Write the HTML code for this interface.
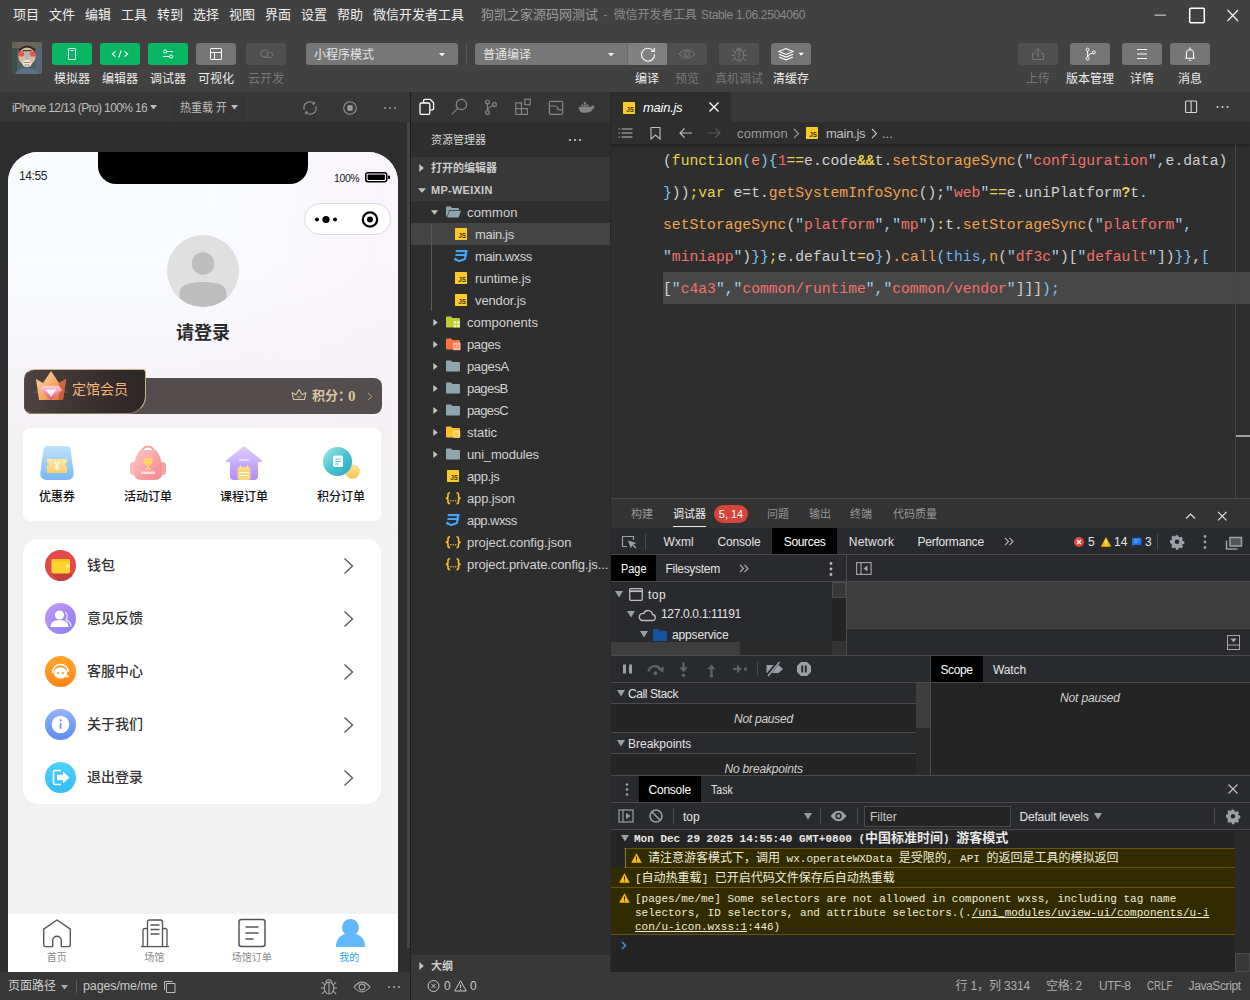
<!DOCTYPE html>
<html lang="zh-CN">
<head>
<meta charset="utf-8">
<title>微信开发者工具</title>
<style>
*{box-sizing:border-box;margin:0;padding:0}
html,body{width:1250px;height:1000px;overflow:hidden;background:#414141}
body{position:relative;font-family:"Liberation Sans","Noto Sans CJK SC",sans-serif;font-size:12px;color:#ddd;-webkit-font-smoothing:antialiased}
.a{position:absolute;white-space:nowrap}
svg{display:block;overflow:visible}
/* ---------- menubar ---------- */
#menubar{left:0;top:0;width:1250px;height:30px;background:#414141}
#menubar .mi{top:5px;height:20px;line-height:20px;font-size:13px;color:#f0f0f0}
#title{left:481px;top:5px;height:20px;line-height:20px;font-size:13px;color:#8d8d8d}
.ti{top:5px;height:20px;line-height:20px;font-size:12px;color:#8a8a8a}
/* ---------- toolbar ---------- */
#toolbar{left:0;top:30px;width:1250px;height:62px;background:#414141}
.tb{top:13px;width:40px;height:22px;border-radius:3px;background:#757575}
.tb.g{background:#07b562}
.tb.d{background:#505050}
.tb svg{position:absolute;left:0;top:0}
.tl{top:40.5px;width:80px;height:16px;line-height:16px;text-align:center;font-size:12px;color:#ececec}
.tl.d{color:#777}
.dd{top:13px;height:22px;border-radius:3px;background:#777;line-height:25px;font-size:12px;color:#e6e6e6;padding-left:8px}

/* ---------- simulator ---------- */
#sim{left:0;top:92px;width:410px;height:908px;background:#2e2e2e}
#simbar{left:0;top:0;width:410px;height:30px;background:#373737}
#simbar span{top:8px;height:16px;line-height:16px;font-size:12px;color:#bdbdbd}
#simfoot{left:0;top:880px;width:410px;height:28px;background:#383838}
#phone{left:8px;top:60px;width:390px;height:820px;background:#f2f2f2;border-radius:30px 30px 0 0;overflow:hidden;color:#222;font-family:"Liberation Sans","Noto Sans CJK SC",sans-serif}
#phone .bg1{left:0;top:0;width:390px;height:420px;background:linear-gradient(100deg,#f8fbff 0%,#f8fbff 45%,#fbf2fa 100%)}
#phone .bg2{left:0;top:110px;width:390px;height:310px;background:linear-gradient(to bottom,rgba(246,241,246,0) 0%,rgba(246,241,246,.9) 45%,#f3f1f3 75%,#f2f2f2 100%)}
.gl{top:338px;height:14px;line-height:14px;font-size:12px;color:#111;font-weight:500;text-align:center}
.li{left:79px;height:20px;line-height:20px;font-size:14px;color:#333;font-weight:500}
.tabl{top:800px;width:97.5px;height:12px;line-height:12px;font-size:10px;color:#8a8a8a;text-align:center}

/* ---------- explorer ---------- */
#exp{left:411px;top:92px;width:199px;height:908px;background:#2e2e2e}
.sec{left:0;width:199px;height:22px;background:#383838}
.sec span{left:20px;top:0;height:22px;line-height:22px;font-size:11px;font-weight:bold;color:#ccc}
.tr{left:0;width:199px;height:22px}
.tr span{top:1px;height:22px;line-height:22px;font-size:13px;color:#d2d2d2}
.tr svg{position:absolute}
/* ---------- editor ---------- */
#ed{left:610px;top:92px;width:640px;height:406px;background:#2e2e2e}
#code{left:53px;top:53px;font-family:"Liberation Mono",monospace;font-size:14.690px;line-height:32px;color:#cfcfcf;white-space:pre}
#code i{font-style:normal}
.y{color:#e6d44c}.o{color:#f2a24c}.b{color:#7dc4f2}.s{color:#f0726a}.q{color:#a9cfea}.r{color:#f2625c}.k{color:#6cb2f4}.p{color:#f08a6a}

/* ---------- debugger panel ---------- */
#pn{left:610px;top:498px;width:640px;height:474px;background:#242424;color:#d8d8d8}
#pn .t{height:16px;line-height:16px;font-size:12px}
.pt{top:8px;height:16px;line-height:16px;font-size:11px;color:#969696}
.dt{top:36px;height:16px;line-height:16px;font-size:12px;color:#e4e4e4}
.cl{font-family:"Liberation Mono","Noto Sans CJK SC",monospace;font-size:11px;line-height:14px;color:#f1ecd9;height:14px}
.cj{font-size:12px}
#loghdr .cj{font-size:13px}
#status{left:610px;top:972px;width:640px;height:28px;background:#383838}
#status span{top:6px;height:16px;line-height:16px;font-size:12px;color:#adadad}
</style>
</head>
<body>
<!-- MENUBAR -->
<div id="menubar" class="a">
<span class="a mi" style="left:13px">项目</span>
<span class="a mi" style="left:49px">文件</span>
<span class="a mi" style="left:85px">编辑</span>
<span class="a mi" style="left:121px">工具</span>
<span class="a mi" style="left:157px">转到</span>
<span class="a mi" style="left:193px">选择</span>
<span class="a mi" style="left:229px">视图</span>
<span class="a mi" style="left:265px">界面</span>
<span class="a mi" style="left:301px">设置</span>
<span class="a mi" style="left:337px">帮助</span>
<span class="a mi" style="left:373px">微信开发者工具</span>
<span class="a ti" style="letter-spacing:0.01px;left:481px;font-size:13px;color:#9c9c9c">狗凯之家源码网测试</span><span class="a ti" style="left:603.5px">-</span><span class="a ti" style="letter-spacing:-0.14px;left:613.7px">微信开发者工具</span><span class="a ti" style="letter-spacing:-0.35px;left:701px">Stable 1.06.2504060</span>
<svg class="a" style="left:1150px;top:4px" width="96" height="24" viewBox="0 0 96 24" fill="none">
<path d="M4.5 11.2H16" stroke="#a6a6a6" stroke-width="1.6"/>
<rect x="39.7" y="4.2" width="14.6" height="14.6" rx="1" stroke="#fff" stroke-width="1.5"/>
<path d="M77.5 6L88 17M88 6L77.5 17" stroke="#f2f2f2" stroke-width="1.2"/>
</svg>
</div>
<!-- TOOLBAR -->
<div id="toolbar" class="a">
<!-- avatar -->
<svg class="a" style="left:12px;top:12px" width="30" height="32" viewBox="0 0 30 32">
<defs><clipPath id="avc"><rect width="30" height="32" rx="2"/></clipPath></defs>
<g clip-path="url(#avc)">
<rect width="30" height="32" fill="#4d5f5c"/>
<rect x="0" y="0" width="30" height="6" fill="#6b6459"/>
<rect x="24" y="4" width="6" height="28" fill="#56657a"/>
<rect x="0" y="6" width="5" height="26" fill="#3c4f4e"/>
<path d="M7 7q8-7 16 0v4H7z" fill="#2f2724"/>
<ellipse cx="15" cy="14.500" rx="8.600" ry="9" fill="#d9bc9e"/>
<ellipse cx="9.300" cy="12" rx="3.100" ry="2.700" fill="#e5564b"/>
<ellipse cx="20.700" cy="12" rx="3.100" ry="2.700" fill="#e5564b"/>
<ellipse cx="15" cy="13.500" rx="2.600" ry="3.400" fill="#a5b6c4"/>
<rect x="10.500" y="8" width="9" height="1.300" fill="#4a3c34"/>
<ellipse cx="15" cy="21.500" rx="4.600" ry="3.400" fill="#efe6dc"/>
<path d="M11.500 20.500h7M12.500 23h5" stroke="#8a6a58" stroke-width=".8"/>
<path d="M3 32q2-6 12-6t12 6z" fill="#5d708c"/>
</g>
</svg>
<!-- left buttons -->
<div class="a tb g" style="left:52px"><svg width="40" height="22" viewBox="0 0 40 22" fill="none" stroke="#fff" stroke-width="1"><rect x="16.5" y="5.5" width="7" height="11" rx="0.8"/><path d="M18.5 7.5h3"/></svg></div>
<div class="a tb g" style="left:100px"><svg width="40" height="22" viewBox="0 0 40 22" fill="none" stroke="#fff" stroke-width="1.1"><path d="M15.5 8.3L12.3 11l3.2 2.7M24.5 8.3l3.2 2.7-3.2 2.7M21.3 7.5l-2.6 7"/></svg></div>
<div class="a tb g" style="left:148px"><svg width="40" height="22" viewBox="0 0 40 22" fill="none" stroke="#fff" stroke-width="1"><path d="M18.800 8.500H25M15 13.500h6.400"/><circle cx="17.200" cy="8.500" r="1.600"/><circle cx="23" cy="13.500" r="1.600"/></svg></div>
<div class="a tb" style="left:196px"><svg width="40" height="22" viewBox="0 0 40 22" fill="none" stroke="#fff" stroke-width="1"><rect x="14.5" y="5.5" width="11" height="11" rx="0.6"/><path d="M14.5 9.5h11M18.5 9.5v7"/></svg></div>
<div class="a tb d" style="left:246px"><svg width="40" height="22" viewBox="0 0 40 22" fill="none" stroke="#787878" stroke-width="1"><circle cx="18.300" cy="10.500" r="3.600"/><path d="M21.300 12.400a2.700 2.700 0 1 1 1.700 2h-4.500"/></svg></div>
<span class="a tl" style="left:32px">模拟器</span>
<span class="a tl" style="left:80px">编辑器</span>
<span class="a tl" style="left:128px">调试器</span>
<span class="a tl" style="left:176px">可视化</span>
<span class="a tl d" style="left:226px">云开发</span>
<!-- dropdowns -->
<div class="a dd" style="left:306px;width:152px">小程序模式</div>
<svg class="a" style="left:439px;top:23px" width="6" height="4" viewBox="0 0 6 4"><path d="M0 0h6L3 3.6z" fill="#f0f0f0"/></svg>
<div class="a" style="left:466px;top:13px;width:1px;height:22px;background:#555"></div>
<div class="a dd" style="left:475px;width:152px;border-radius:3px 0 0 3px">普通编译</div>
<svg class="a" style="left:608px;top:23px" width="6" height="4" viewBox="0 0 6 4"><path d="M0 0h6L3 3.6z" fill="#f0f0f0"/></svg>
<div class="a tb" style="left:627px;border-radius:0;background:#808080;border-left:1px solid #6a6a6a"><svg width="40" height="22" viewBox="0 0 40 22" fill="none" stroke="#fff" stroke-width="1.1"><path d="M25 7.600A6.500 6.500 0 1 0 26.500 11.400"/><path d="M26.300 5v3.400h-3.400"/></svg></div>
<div class="a tb d" style="left:667px;border-radius:0 3px 3px 0"><svg width="40" height="22" viewBox="0 0 40 22" fill="none" stroke="#787878" stroke-width="1"><path d="M12 11q8-8.600 16 0q-8 8.600-16 0z"/><circle cx="20" cy="11" r="2.500"/></svg></div>
<div class="a tb d" style="left:719px;width:40px"><svg width="40" height="22" viewBox="0 0 40 22" fill="none" stroke="#787878" stroke-width="1"><ellipse cx="20" cy="12.300" rx="4.600" ry="5.800"/><path d="M20 6.500v11.600M17.300 7a2.900 2.900 0 0 1 5.400 0M15.400 12.300h-3.200M24.600 12.300h3.200M16 9.200l-3-2.400M24 9.200l3-2.400M16 15.400l-3 2.400M24 15.400l3 2.400"/></svg></div>
<div class="a tb" style="left:771px"><svg width="40" height="22" viewBox="0 0 40 22" fill="none" stroke="#fff" stroke-width="1.1"><path d="M15 5.6l7 2.9-7 2.9-7-2.9z"/><path d="M8 11.2l7 2.9 7-2.9M8 13.9l7 2.9 7-2.9"/><path d="M27.6 9.8h5.2l-2.6 3z" fill="#fff" stroke="none"/></svg></div>
<span class="a tl" style="left:607px">编译</span>
<span class="a tl d" style="left:647px">预览</span>
<span class="a tl d" style="left:699px">真机调试</span>
<span class="a tl" style="left:751px">清缓存</span>
<!-- right buttons -->
<div class="a tb d" style="left:1018px"><svg width="40" height="22" viewBox="0 0 40 22" fill="none" stroke="#787878" stroke-width="1"><path d="M20 14V5.8M17 8.6l3-3 3 3M16.8 10.5h-2.3v6h11v-6h-2.3"/></svg></div>
<div class="a tb" style="left:1070px"><svg width="40" height="22" viewBox="0 0 40 22" fill="none" stroke="#fff" stroke-width="1"><circle cx="17.6" cy="6.6" r="1.5"/><circle cx="17.6" cy="15.4" r="1.5"/><circle cx="23.8" cy="9.4" r="1.5"/><path d="M17.6 8.1v5.8M17.7 13.6q.4-2.6 4.8-3.4"/></svg></div>
<div class="a tb" style="left:1122px"><svg width="40" height="22" viewBox="0 0 40 22" fill="none" stroke="#fff" stroke-width="1.1"><path d="M15 6.5h10M15 11h10M15 15.5h10"/></svg></div>
<div class="a tb" style="left:1170px"><svg width="40" height="22" viewBox="0 0 40 22" fill="none" stroke="#fff" stroke-width="1.1"><path d="M15.2 15.2h9.6M16.4 15v-4.6a3.6 3.6 0 0 1 7.2 0V15M20 4.6v1.6M18.8 17.3h2.4"/></svg></div>
<span class="a tl d" style="left:998px">上传</span>
<span class="a tl" style="left:1050px">版本管理</span>
<span class="a tl" style="left:1102px">详情</span>
<span class="a tl" style="left:1150px">消息</span>
</div>

<!-- SIMULATOR -->
<div id="sim" class="a">
<div id="simbar" class="a">
<span class="a" style="letter-spacing:-0.63px;left:12px">iPhone 12/13 (Pro) 100% 16</span>
<svg class="a" style="left:150px;top:13px" width="7" height="5" viewBox="0 0 7 5"><path d="M0 0h7L3.5 4.4z" fill="#bdbdbd"/></svg>
<div class="a" style="left:169px;top:0;width:1px;height:30px;background:#3d3d3d"></div>
<span class="a" style="transform:scaleX(0.915);transform-origin:0 50%;left:180px">热重载 开</span>
<svg class="a" style="left:231px;top:13px" width="7" height="5" viewBox="0 0 7 5"><path d="M0 0h7L3.5 4.4z" fill="#bdbdbd"/></svg>
<div class="a" style="left:247px;top:0;width:1px;height:30px;background:#3d3d3d"></div>
<svg class="a" style="left:300px;top:6px" width="100" height="20" viewBox="0 0 100 20" fill="none" stroke="#929292" stroke-width="1.1">
<path d="M4.300 11.800A5.900 5.900 0 0 1 14.200 5.800M15.700 8.200A5.900 5.900 0 0 1 5.800 14.200"/><path d="M14.800 3.600l-.4 2.600-2.600-.4M5.200 16.400l.4-2.600 2.600.4" stroke-width=".9"/>
<circle cx="50" cy="10" r="6.3"/><rect x="47.3" y="7.3" width="5.4" height="5.4" rx="0.8" fill="#9a9a9a" stroke="none"/>
<g fill="#9a9a9a" stroke="none"><circle cx="85" cy="10" r="1"/><circle cx="90" cy="10" r="1"/><circle cx="95" cy="10" r="1"/></g>
</svg>
</div>
<div class="a" style="left:407px;top:30px;width:3px;height:826px;background:#454545"></div>
<!-- PHONE -->
<div id="phone" class="a">
<div class="a bg1"></div><div class="a bg2"></div>
<div class="a" style="left:90px;top:0;width:210px;height:32px;background:#000;border-radius:0 0 18px 18px"></div>
<span class="a" style="left:11px;top:17px;height:14px;line-height:14px;font-size:12px;color:#222;letter-spacing:-0.4px">14:55</span>
<span class="a" style="left:326px;top:19px;height:14px;line-height:14px;font-size:10.5px;color:#222;letter-spacing:-0.4px">100%</span>
<svg class="a" style="left:357px;top:20px" width="27" height="11" viewBox="0 0 27 11"><rect x="0.75" y="0.75" width="21" height="9" rx="2.2" fill="none" stroke="#000" stroke-width="1.5"/><rect x="2.6" y="2.6" width="17.3" height="5.3" rx="1" fill="#000"/><rect x="23" y="3.5" width="2" height="3.5" rx="0.8" fill="#000"/></svg>
<!-- capsule -->
<div class="a" style="left:296px;top:51px;width:87px;height:32px;border-radius:16px;background:#fff;border:1px solid #dcdcdc"></div>
<svg class="a" style="left:296px;top:51px" width="87" height="32" viewBox="0 0 87 32"><circle cx="13" cy="16.5" r="2" fill="#000"/><circle cx="22" cy="16.5" r="3.6" fill="#000"/><circle cx="31" cy="16.5" r="2" fill="#000"/><circle cx="66" cy="16.5" r="7.2" fill="none" stroke="#000" stroke-width="2.2"/><circle cx="66" cy="16.5" r="3" fill="#000"/></svg>
<!-- avatar -->
<svg class="a" style="left:159px;top:83px" width="72" height="72" viewBox="0 0 72 72"><defs><clipPath id="pc"><circle cx="36" cy="36" r="36"/></clipPath></defs><circle cx="36" cy="36" r="36" fill="#e0e0e0"/><g clip-path="url(#pc)" fill="#bdbdbd"><circle cx="36" cy="28.5" r="11.3"/><path d="M12.5 72V58q0-11 23.500-11t23.500 11v14z"/></g></svg>
<span class="a" style="left:0;top:169px;width:390px;height:24px;line-height:24px;font-size:18px;font-weight:bold;color:#2a2a2a;text-align:center">请登录</span>
<!-- vip bar -->
<div class="a" style="left:16px;top:226px;width:358px;height:36px;border-radius:8px;background:#534d4e"></div>
<div class="a" style="left:16px;top:217px;width:122px;height:45px;border-radius:10px 3px 18px 8px;background:linear-gradient(90deg,#4d4341 0%,#352c2b 70%,#2e2727 100%);border:1px solid #c9b48c;border-left-color:#5a4d48;border-bottom-color:#8a7a60"></div>
<svg class="a" style="left:22px;top:216px" width="42" height="36" viewBox="0 0 42 36">
<defs><linearGradient id="cr1" x1="0" y1="0" x2="1" y2="1"><stop offset="0" stop-color="#ffd9a0"/><stop offset="0.6" stop-color="#f2a35e"/><stop offset="1" stop-color="#d2603a"/></linearGradient>
<linearGradient id="cr2" x1="0" y1="0" x2="0" y2="1"><stop offset="0" stop-color="#ffd1e0"/><stop offset="1" stop-color="#e6486e"/></linearGradient></defs>
<ellipse cx="21" cy="24" rx="18" ry="1.2" fill="#8a6a4a" opacity=".6"/>
<path d="M6 11l7 4 8-12 8 12 7-4-3 21H9z" fill="url(#cr1)"/>
<path d="M29 15l7-4-3 21h-4z" fill="#c85a38" opacity=".8"/>
<path d="M13 18h16l3 4-11 10L10 22z" fill="url(#cr2)"/>
<path d="M15.500 21.500h11L21 29z" fill="#fff" opacity=".85"/>
</svg>
<span class="a" style="left:64px;top:227px;height:20px;line-height:20px;font-size:14px;color:#f2b476">定馆会员</span>
<svg class="a" style="left:283px;top:236px" width="16" height="14" viewBox="0 0 16 14" fill="none" stroke="#dcc3a0" stroke-width="1.1"><path d="M2.500 11.500L1.200 4.600l3.600 2.200L8 1.600l3.200 5.200 3.600-2.200-1.300 6.900z" stroke-linejoin="round"/><path d="M6.300 8.600q1.700 1.300 3.400 0"/></svg>
<span class="a" style="left:304px;top:235px;height:18px;line-height:18px;font-size:13px;font-weight:bold;color:#dcc3a0">积分：</span>
<span class="a" style="left:340px;top:235px;height:18px;line-height:18px;font-size:15px;font-weight:bold;color:#dcc3a0;font-family:'Liberation Serif',serif">0</span>
<svg class="a" style="left:359px;top:240px" width="6" height="9" viewBox="0 0 6 9" fill="none" stroke="#b9a58a" stroke-width="1"><path d="M1 .8L4.800 4.500 1 8.200"/></svg>
<!-- grid card -->
<div class="a" style="left:15px;top:276px;width:358px;height:93px;border-radius:7px;background:#fff"></div>

<svg class="a" style="left:32px;top:294px" width="34" height="34" viewBox="0 0 34 34"><defs><linearGradient id="g1" x1="0" y1="0" x2="0" y2="1"><stop offset="0" stop-color="#bfe3fb"/><stop offset="1" stop-color="#78b6f6"/></linearGradient><linearGradient id="g1b" x1="0" y1="0" x2="0" y2="1"><stop offset="0" stop-color="#ffe9a8"/><stop offset="1" stop-color="#f8cf6a"/></linearGradient></defs><path d="M7 0h20q3 0 3.600 4l3 22q.8 8-7 8H7.400q-8 0-7-8l3-22Q4 0 7 0z" fill="url(#g1)"/><path d="M7 13h20v3.500a1.800 1.800 0 0 0 0 3.600V27H7v-6.900a1.800 1.800 0 0 0 0-3.600z" fill="url(#g1b)"/><path d="M14.800 16l2.200 3 2.200-3M17 19v5M14.800 20.500h4.400M14.800 22.500h4.400" stroke="#fff" stroke-width="1.100" fill="none"/></svg>
<svg class="a" style="left:122px;top:294px" width="36" height="34" viewBox="0 0 36 34"><defs><linearGradient id="g2" x1="0" y1="0" x2="1" y2="1"><stop offset="0" stop-color="#fcc6c8"/><stop offset="1" stop-color="#f78489"/></linearGradient></defs><path d="M11.500 7a6.500 6.500 0 0 1 13 0" fill="none" stroke="#f9a3a8" stroke-width="2"/><rect x="0" y="16" width="7" height="13" rx="3.500" fill="#fbb9bd"/><rect x="29" y="16" width="7" height="13" rx="3.500" fill="#f9a0a5"/><path d="M10 4h16q4 4 6 14v9q0 7-7 7H11q-7 0-7-7v-9q2-10 6-14z" fill="url(#g2)"/><path d="M13.500 12h9v3a4.500 4.500 0 0 1-9 0z" fill="#ffd36a"/><path d="M17.200 19h1.600v3h-1.600z" fill="#ffd36a"/><rect x="15" y="22" width="6" height="1.500" fill="#ffd36a"/><rect x="11" y="25.500" width="14" height="2.600" rx="1" fill="#fde1e2"/></svg>
<svg class="a" style="left:218px;top:294px" width="36" height="34" viewBox="0 0 36 34"><defs><linearGradient id="g3" x1="0" y1="0" x2="0" y2="1"><stop offset="0" stop-color="#e0d0fd"/><stop offset="1" stop-color="#b18af8"/></linearGradient></defs><path d="M18 0L36 14.500q.5 1.500-1.500 1.500H32v14q0 4-4 4H8q-4 0-4-4V16H1.500Q-.5 16 0 14.500z" fill="url(#g3)"/><rect x="13" y="13" width="10" height="2" rx="1" fill="#e9defd"/><rect x="11.500" y="21" width="13" height="13" rx="2" fill="#fbd77c"/><path d="M14.500 19.500v3M21.500 19.500v3" stroke="#fde7a8" stroke-width="1.200"/><path d="M13.500 26.500h9M13.500 29.500h9" stroke="#fff" stroke-width="1.100"/></svg>
<svg class="a" style="left:315px;top:295px" width="37" height="32" viewBox="0 0 37 32"><defs><linearGradient id="g4" x1="0" y1="0" x2="1" y2="1"><stop offset="0" stop-color="#a5ebe8"/><stop offset="0.500" stop-color="#4cc5cf"/><stop offset="1" stop-color="#2aa6c4"/></linearGradient><linearGradient id="g4b" x1="0" y1="0" x2="0" y2="1"><stop offset="0" stop-color="#fde49a"/><stop offset="1" stop-color="#f7c34e"/></linearGradient></defs><circle cx="29.500" cy="24.500" r="7.300" fill="url(#g4b)"/><circle cx="14.500" cy="14.500" r="14.500" fill="url(#g4)"/><rect x="10" y="8.500" width="10" height="11.500" rx="1.800" fill="#fff"/><path d="M12 12h6M12 14.500h6M12 17h4" stroke="#5fd0d4" stroke-width="1.100"/></svg>

<span class="a gl" style="left:31px;width:36px">优惠券</span>
<span class="a gl" style="left:116px;width:48px">活动订单</span>
<span class="a gl" style="left:212px;width:48px">课程订单</span>
<span class="a gl" style="left:309px;width:48px">积分订单</span>
<!-- list card -->
<div class="a" style="left:15px;top:387px;width:358px;height:265px;border-radius:15px;background:#fff"></div>

<svg class="a" style="left:37px;top:398px" width="31" height="31" viewBox="0 0 31 31"><defs><clipPath id="l1"><circle cx="15.500" cy="15.500" r="15.500"/></clipPath></defs><circle cx="15.500" cy="15.500" r="15.500" fill="#e2494a"/><g clip-path="url(#l1)"><path d="M6.500 23.500L25 22.500 40 40H20z" fill="#c63d3e"/></g><rect x="6.500" y="9" width="18.500" height="14.500" rx="2" fill="#ffd42e"/><rect x="6.500" y="9" width="18.500" height="2.600" rx="1.300" fill="#f7c21c"/><rect x="20.500" y="14.500" width="4.500" height="3" rx="1" fill="#ffe88a"/></svg>
<svg class="a" style="left:37px;top:451px" width="31" height="31" viewBox="0 0 31 31"><defs><linearGradient id="l2" x1="0" y1="0" x2="1" y2="1"><stop offset="0" stop-color="#c19af8"/><stop offset="1" stop-color="#8d7af7"/></linearGradient></defs><circle cx="15.500" cy="15.500" r="15.500" fill="url(#l2)"/><circle cx="14.500" cy="12" r="4.600" fill="#fff"/><path d="M5.500 24q0-7 9-7t9 7z" fill="#fff"/><path d="M20 9q4 3 1 8 5 2 5 6.500" fill="none" stroke="#e5dafd" stroke-width="1.400"/></svg>
<svg class="a" style="left:37px;top:504px" width="31" height="31" viewBox="0 0 31 31"><defs><linearGradient id="l3" x1="0" y1="0" x2="0" y2="1"><stop offset="0" stop-color="#ffa82a"/><stop offset="1" stop-color="#ff8418"/></linearGradient></defs><circle cx="15.500" cy="15.500" r="15.500" fill="url(#l3)"/><path d="M7.500 17a8 8 0 0 1 16-1" fill="none" stroke="#fff" stroke-width="1.500"/><ellipse cx="15.500" cy="17" rx="6.800" ry="5.800" fill="#fff"/><path d="M21 19l3.500 1-3 2z" fill="#fff"/><circle cx="13" cy="17" r="1" fill="#ff8f1e"/><circle cx="18" cy="17" r="1" fill="#ff8f1e"/></svg>
<svg class="a" style="left:37px;top:557px" width="31" height="31" viewBox="0 0 31 31"><defs><linearGradient id="l4" x1="0" y1="0" x2="0" y2="1"><stop offset="0" stop-color="#92b2f4"/><stop offset="1" stop-color="#5c8ef2"/></linearGradient></defs><circle cx="15.500" cy="15.500" r="15.500" fill="url(#l4)"/><circle cx="15.500" cy="15.500" r="8.800" fill="#fff"/><rect x="14.700" y="14" width="1.800" height="6" rx=".5" fill="#6a98f3"/><circle cx="15.600" cy="11.400" r="1.100" fill="#6a98f3"/></svg>
<svg class="a" style="left:37px;top:610px" width="31" height="31" viewBox="0 0 31 31"><defs><linearGradient id="l5" x1="0" y1="0" x2="0" y2="1"><stop offset="0" stop-color="#4dd2ff"/><stop offset="1" stop-color="#33bdf5"/></linearGradient></defs><circle cx="15.500" cy="15.500" r="15.500" fill="url(#l5)"/><path d="M16 8.500H10q-1.500 0-1.500 1.500v11q0 1.500 1.500 1.500h6" fill="none" stroke="#fff" stroke-width="1.600"/><path d="M12 12.800h6V9.500l6.500 6-6.500 6v-3.300h-6z" fill="#fff"/></svg>

<span class="a li" style="top:403px">钱包</span>
<span class="a li" style="top:456px">意见反馈</span>
<span class="a li" style="top:509px">客服中心</span>
<span class="a li" style="top:562px">关于我们</span>
<span class="a li" style="top:615px">退出登录</span>
<svg class="a" style="left:335px;top:404.5px" width="11" height="18" viewBox="0 0 11 18" fill="none" stroke="#555" stroke-width="1.300"><path d="M1.500 1.500L9.500 9 1.500 16.500"/></svg>
<svg class="a" style="left:335px;top:457.5px" width="11" height="18" viewBox="0 0 11 18" fill="none" stroke="#555" stroke-width="1.300"><path d="M1.500 1.500L9.500 9 1.500 16.500"/></svg>
<svg class="a" style="left:335px;top:510.5px" width="11" height="18" viewBox="0 0 11 18" fill="none" stroke="#555" stroke-width="1.300"><path d="M1.500 1.500L9.500 9 1.500 16.500"/></svg>
<svg class="a" style="left:335px;top:563.5px" width="11" height="18" viewBox="0 0 11 18" fill="none" stroke="#555" stroke-width="1.300"><path d="M1.500 1.500L9.500 9 1.500 16.500"/></svg>
<svg class="a" style="left:335px;top:616.5px" width="11" height="18" viewBox="0 0 11 18" fill="none" stroke="#555" stroke-width="1.300"><path d="M1.500 1.500L9.500 9 1.500 16.500"/></svg>

<!-- tabbar -->
<div class="a" style="left:0;top:762px;width:390px;height:58px;background:#fff"></div>

<svg class="a" style="left:34px;top:766px" width="30" height="30" viewBox="0 0 30 30" fill="none" stroke="#555" stroke-width="1.400" stroke-linejoin="round"><path d="M15 2L1.700 11.200V27q0 1.600 1.600 1.600h7.400v-6a4.300 4.300 0 0 1 8.600 0v6h7.400q1.600 0 1.600-1.600V11.200z"/></svg>
<svg class="a" style="left:133px;top:766px" width="28" height="30" viewBox="0 0 28 30" fill="none" stroke="#555" stroke-width="1.300"><path d="M0 28.600h28"/><path d="M6.500 28V4q0-2 2-2h11q2 0 2 2v24"/><path d="M6.500 10.500H4q-2 0-2 2V28M21.500 10.500H24q2 0 2 2V28"/><path d="M9.500 7h9M9.500 11.500h9M9.500 16h9"/></svg>
<svg class="a" style="left:230px;top:766px" width="28" height="30" viewBox="0 0 28 30" fill="none" stroke="#555" stroke-width="1.500"><rect x="1" y="1.500" width="26" height="27" rx="2.500"/><path d="M7.500 9h13M7.500 15h13M7.500 21h8" stroke-width="1.300"/></svg>
<svg class="a" style="left:328px;top:767px" width="29" height="28" viewBox="0 0 29 28" fill="#62b8fd"><circle cx="14.500" cy="8.500" r="8.500"/><path d="M0 28q0-13.500 14.500-13.500T29 28z"/></svg>

<span class="a tabl" style="left:0">首页</span>
<span class="a tabl" style="left:97.5px">场馆</span>
<span class="a tabl" style="left:195px">场馆订单</span>
<span class="a tabl" style="left:292.5px;color:#2aa9f2">我的</span>
</div>
<!-- sim footer -->
<div id="simfoot" class="a">
<span class="a" style="left:8px;top:6px;height:16px;line-height:16px;font-size:12px;color:#d0d0d0">页面路径</span>
<svg class="a" style="left:61px;top:13px" width="7" height="5" viewBox="0 0 7 5"><path d="M0 0h7L3.500 4.400z" fill="#aaa"/></svg>
<div class="a" style="left:76px;top:8px;width:1px;height:13px;background:#5a5a5a"></div>
<span class="a" style="letter-spacing:-0.12px;left:83px;top:6px;height:16px;line-height:16px;font-size:12.500px;color:#c8c8c8">pages/me/me</span>
<svg class="a" style="left:163px;top:8px" width="14" height="14" viewBox="0 0 14 14" fill="none" stroke="#bdbdbd" stroke-width="1"><path d="M3.500 3.500h8.500v9h-8.500z"/><path d="M1.500 10V1.500h8"/></svg>
<svg class="a" style="left:318px;top:5px" width="90" height="20" viewBox="0 0 90 20" fill="none" stroke="#a8a8a8" stroke-width="1.100">
<ellipse cx="11" cy="11" rx="4.700" ry="6"/><path d="M11 5v12M8 5.800a3 3 0 0 1 6 0M6.300 11H2.800M15.700 11h3.500M6.900 7.800L3.800 5.200M15.100 7.800l3.100-2.600M6.900 14.200l-3.100 2.600M15.100 14.200l3.100 2.600"/>
<path d="M36 10q8-9.800 16 0q-8 9.800-16 0z"/><circle cx="44" cy="10" r="2.900"/>
<g fill="#a8a8a8" stroke="none"><circle cx="71" cy="10" r="1"/><circle cx="76" cy="10" r="1"/><circle cx="81" cy="10" r="1"/></g>
</svg>
</div>
</div>
<div class="a" style="left:410px;top:92px;width:1px;height:908px;background:#1f1f1f"></div>

<!-- EXPLORER -->
<div id="exp" class="a">
<div class="a" style="left:0;top:0;width:199px;height:30px;background:#353535"></div>
<svg class="a" style="left:0;top:0" width="199" height="32" viewBox="0 0 199 32" fill="none" stroke="#858585" stroke-width="1.200">
<g stroke="#fff" stroke-width="1.300"><path d="M12.600 10.500V8.600q0-1.300 1.300-1.300h5.300l3.400 3.400v5.800q0 1.300-1.300 1.300h-2"/><rect x="9" y="11" width="9.800" height="11.300" rx="1.300"/></g>
<circle cx="50.400" cy="12.500" r="5.200"/><path d="M46.700 16.300l-5.900 6.100"/>
<circle cx="76.500" cy="9.900" r="1.900"/><circle cx="76.500" cy="20.500" r="1.900"/><circle cx="83.500" cy="12.500" r="1.900"/><path d="M76.500 11.800v6.800M76.500 18.600q.3-3.200 5.300-4.800"/>
<path d="M104.800 10.900h5.700v5.700h5.800v5.800h-11.500zM104.800 16.600h5.700M110.500 16.600v5.800"/><rect x="113.800" y="7.200" width="5.400" height="5.600"/>
<rect x="138.400" y="9.300" width="13.300" height="13.100" rx="1.200"/><path d="M138.400 14h5.600q2.600 0 2.600 1.900t2.600 1.900h2.500"/>
<g fill="#858585" stroke="none"><path d="M167.700 14.800h12.600q.3-1.700 1.900-1.900.6 1 .4 1.900h1.400q-.4 1.500-2 1.600Q180.500 20.800 175 20.800h-2.500q-4.800 0-4.800-6z"/><path d="M170.300 12.400h2v2h-2zM172.800 12.400h2v2h-2zM175.300 12.400h2v2h-2zM172.800 10h2v2h-2z"/></g>
</svg>
<span class="a" style="left:20px;top:39px;height:18px;line-height:18px;font-size:11px;color:#d4d4d4">资源管理器</span>
<svg class="a" style="left:157px;top:46px" width="14" height="4" viewBox="0 0 14 4" fill="#d0d0d0"><circle cx="2" cy="2" r="1.100"/><circle cx="7" cy="2" r="1.100"/><circle cx="12" cy="2" r="1.100"/></svg>
<div class="a sec" style="top:65px"><svg class="a" style="left:8px;top:7px" width="5" height="8" viewBox="0 0 5 8"><path d="M.3 0v8L4.800 4z" fill="#c5c5c5"/></svg><span class="a">打开的编辑器</span></div>
<div class="a sec" style="top:87px"><svg class="a" style="left:7px;top:9px" width="8" height="5" viewBox="0 0 8 5"><path d="M0 .3h8L4 4.800z" fill="#c5c5c5"/></svg><span class="a" style="letter-spacing:0.26px;">MP-WEIXIN</span></div>
<div class="a tr" style="top:109px"><svg style="left:20px;top:9px" width="7" height="5" viewBox="0 0 7 5"><path d="M0 .3h7L3.500 4.700z" fill="#c5c5c5"/></svg><svg style="left:35px;top:5px" width="16" height="13" viewBox="0 0 16 13"><path d="M0 1.500Q0 .5 1 .5h3.600l1.400 1.500H12q1 0 1 1V4H3.200L1 10.500H0z" fill="#90a4ae"/><path d="M3.600 4.800H15l-2.400 6.700H1.200z" fill="#90a4ae"/></svg><span class="a" style="letter-spacing:0.13px;left:56px">common</span></div>
<div class="a tr" style="top:131px;background:#444"><svg style="left:44px;top:5px" width="12" height="12" viewBox="0 0 12 12"><rect width="12" height="12" rx="0.600" fill="#ffca28"/><text x="11" y="10.300" text-anchor="end" font-family="Liberation Sans,sans-serif" font-weight="bold" font-size="6.300" fill="#3a3320">JS</text></svg><span class="a" style="letter-spacing:-0.34px;left:64px">main.js</span></div>
<div class="a tr" style="top:153px"><svg style="left:43px;top:5px" width="14" height="12.500" viewBox="0 0 14 12.500"><path d="M1.900 0H13.700L11.900 9.800 5.300 12.300 0 10 .4 7.700H2.600L2.400 8.800 5.400 10 9.900 8.300 10.300 6H1.200L1.600 4.100H10.600L10.900 2.300H1.500z" fill="#42a5f5"/></svg><span class="a" style="letter-spacing:-0.43px;left:64px">main.wxss</span></div>
<div class="a tr" style="top:175px"><svg style="left:44px;top:5px" width="12" height="12" viewBox="0 0 12 12"><rect width="12" height="12" rx="0.600" fill="#ffca28"/><text x="11" y="10.300" text-anchor="end" font-family="Liberation Sans,sans-serif" font-weight="bold" font-size="6.300" fill="#3a3320">JS</text></svg><span class="a" style="letter-spacing:-0.04px;left:64px">runtime.js</span></div>
<div class="a tr" style="top:197px"><svg style="left:44px;top:5px" width="12" height="12" viewBox="0 0 12 12"><rect width="12" height="12" rx="0.600" fill="#ffca28"/><text x="11" y="10.300" text-anchor="end" font-family="Liberation Sans,sans-serif" font-weight="bold" font-size="6.300" fill="#3a3320">JS</text></svg><span class="a" style="letter-spacing:-0.12px;left:64px">vendor.js</span></div>
<div class="a tr" style="top:219px"><svg style="left:22px;top:8px" width="5" height="7" viewBox="0 0 5 7"><path d="M.3 0v7L4.700 3.500z" fill="#c5c5c5"/></svg><svg style="left:35px;top:5px" width="16" height="13" viewBox="0 0 16 13"><path d="M0 1.500Q0 .5 1 .5h4l1.500 1.500H13q1 0 1 1v7.500q0 1-1 1H1q-1 0-1-1z" fill="#c0ca33"/><g fill="#e6f0a8"><rect x="7.600" y="5" width="2.800" height="2.800"/><rect x="11.200" y="5" width="2.800" height="2.800"/><rect x="7.600" y="8.600" width="2.800" height="2.800"/><rect x="11.200" y="8.600" width="2.800" height="2.800"/></g></svg><span class="a" style="letter-spacing:0.02px;left:56px">components</span></div>
<div class="a tr" style="top:241px"><svg style="left:22px;top:8px" width="5" height="7" viewBox="0 0 5 7"><path d="M.3 0v7L4.700 3.500z" fill="#c5c5c5"/></svg><svg style="left:35px;top:5px" width="16" height="13" viewBox="0 0 16 13"><path d="M0 1.500Q0 .5 1 .5h4l1.500 1.500H13q1 0 1 1v7.500q0 1-1 1H1q-1 0-1-1z" fill="#ff7043"/><rect x="7" y="4.400" width="7.600" height="7.800" rx="1" fill="#ffb199"/><path d="M10 6.800L8.600 8.300 10 9.800M11.600 6.800L13 8.300l-1.400 1.500" stroke="#f4562e" stroke-width=".8" fill="none"/></svg><span class="a" style="letter-spacing:-0.40px;left:56px">pages</span></div>
<div class="a tr" style="top:263px"><svg style="left:22px;top:8px" width="5" height="7" viewBox="0 0 5 7"><path d="M.3 0v7L4.700 3.500z" fill="#c5c5c5"/></svg><svg style="left:35px;top:5px" width="16" height="13" viewBox="0 0 16 13"><path d="M0 1.500Q0 .5 1 .5h4l1.500 1.500H13q1 0 1 1v7.500q0 1-1 1H1q-1 0-1-1z" fill="#90a4ae"/></svg><span class="a" style="letter-spacing:-0.38px;left:56px">pagesA</span></div>
<div class="a tr" style="top:285px"><svg style="left:22px;top:8px" width="5" height="7" viewBox="0 0 5 7"><path d="M.3 0v7L4.700 3.500z" fill="#c5c5c5"/></svg><svg style="left:35px;top:5px" width="16" height="13" viewBox="0 0 16 13"><path d="M0 1.500Q0 .5 1 .5h4l1.500 1.500H13q1 0 1 1v7.500q0 1-1 1H1q-1 0-1-1z" fill="#90a4ae"/></svg><span class="a" style="letter-spacing:-0.56px;left:56px">pagesB</span></div>
<div class="a tr" style="top:307px"><svg style="left:22px;top:8px" width="5" height="7" viewBox="0 0 5 7"><path d="M.3 0v7L4.700 3.500z" fill="#c5c5c5"/></svg><svg style="left:35px;top:5px" width="16" height="13" viewBox="0 0 16 13"><path d="M0 1.500Q0 .5 1 .5h4l1.500 1.500H13q1 0 1 1v7.500q0 1-1 1H1q-1 0-1-1z" fill="#90a4ae"/></svg><span class="a" style="letter-spacing:-0.62px;left:56px">pagesC</span></div>
<div class="a tr" style="top:329px"><svg style="left:22px;top:8px" width="5" height="7" viewBox="0 0 5 7"><path d="M.3 0v7L4.700 3.500z" fill="#c5c5c5"/></svg><svg style="left:35px;top:5px" width="16" height="13" viewBox="0 0 16 13"><path d="M0 1.500Q0 .5 1 .5h4l1.500 1.500H13q1 0 1 1v7.500q0 1-1 1H1q-1 0-1-1z" fill="#fbc02d"/><rect x="7.200" y="4.800" width="7" height="7" rx="1" fill="#ffe58a"/><path d="M8.600 7h4.200M8.600 8.600h4.200M8.600 10.200h4.200" stroke="#e0a400" stroke-width=".7"/></svg><span class="a" style="letter-spacing:-0.06px;left:56px">static</span></div>
<div class="a tr" style="top:351px"><svg style="left:22px;top:8px" width="5" height="7" viewBox="0 0 5 7"><path d="M.3 0v7L4.700 3.500z" fill="#c5c5c5"/></svg><svg style="left:35px;top:5px" width="16" height="13" viewBox="0 0 16 13"><path d="M0 1.500Q0 .5 1 .5h4l1.500 1.500H13q1 0 1 1v7.500q0 1-1 1H1q-1 0-1-1z" fill="#90a4ae"/></svg><span class="a" style="letter-spacing:-0.16px;left:56px">uni_modules</span></div>
<div class="a tr" style="top:373px"><svg style="left:36px;top:5px" width="12" height="12" viewBox="0 0 12 12"><rect width="12" height="12" rx="0.600" fill="#ffca28"/><text x="11" y="10.300" text-anchor="end" font-family="Liberation Sans,sans-serif" font-weight="bold" font-size="6.300" fill="#3a3320">JS</text></svg><span class="a" style="letter-spacing:-0.40px;left:56px">app.js</span></div>
<div class="a tr" style="top:395px"><svg style="left:33.500px;top:4.800px" width="16.500" height="12.400" viewBox="0 0 16.500 12.400" fill="none" stroke="#f9bf2c" stroke-width="1.600"><path d="M5 .8Q3 .8 3 2.600v1.800Q3 6.200 .8 6.200 3 6.200 3 8v1.800q0 1.800 2 1.800M11.500 .8q2 0 2 1.800v1.800q0 1.800 2.200 1.800-2.200 0-2.200 1.800v1.800q0 1.800-2 1.800"/><g fill="#f9bf2c" stroke="none"><circle cx="5.800" cy="8.800" r=".75"/><circle cx="8.250" cy="8.800" r=".75"/><circle cx="10.700" cy="8.800" r=".75"/></g></svg><span class="a" style="letter-spacing:-0.15px;left:56px">app.json</span></div>
<div class="a tr" style="top:417px"><svg style="left:35px;top:5px" width="14" height="12.500" viewBox="0 0 14 12.500"><path d="M1.900 0H13.700L11.900 9.800 5.300 12.300 0 10 .4 7.700H2.600L2.400 8.800 5.400 10 9.900 8.300 10.300 6H1.200L1.600 4.100H10.600L10.900 2.300H1.500z" fill="#42a5f5"/></svg><span class="a" style="letter-spacing:-0.56px;left:56px">app.wxss</span></div>
<div class="a tr" style="top:439px"><svg style="left:33.500px;top:4.800px" width="16.500" height="12.400" viewBox="0 0 16.500 12.400" fill="none" stroke="#f9bf2c" stroke-width="1.600"><path d="M5 .8Q3 .8 3 2.600v1.800Q3 6.200 .8 6.200 3 6.200 3 8v1.800q0 1.800 2 1.800M11.500 .8q2 0 2 1.800v1.800q0 1.800 2.200 1.800-2.200 0-2.200 1.800v1.800q0 1.800-2 1.800"/><g fill="#f9bf2c" stroke="none"><circle cx="5.800" cy="8.800" r=".75"/><circle cx="8.250" cy="8.800" r=".75"/><circle cx="10.700" cy="8.800" r=".75"/></g></svg><span class="a" style="letter-spacing:-0.02px;left:56px">project.config.json</span></div>
<div class="a tr" style="top:461px"><svg style="left:33.500px;top:4.800px" width="16.500" height="12.400" viewBox="0 0 16.500 12.400" fill="none" stroke="#f9bf2c" stroke-width="1.600"><path d="M5 .8Q3 .8 3 2.600v1.800Q3 6.200 .8 6.200 3 6.200 3 8v1.800q0 1.800 2 1.800M11.500 .8q2 0 2 1.800v1.800q0 1.800 2.200 1.800-2.200 0-2.200 1.800v1.800q0 1.800-2 1.800"/><g fill="#f9bf2c" stroke="none"><circle cx="5.800" cy="8.800" r=".75"/><circle cx="8.250" cy="8.800" r=".75"/><circle cx="10.700" cy="8.800" r=".75"/></g></svg><span class="a" style="letter-spacing:-0.09px;left:56px">project.private.config.js...</span></div>

<div class="a" style="left:20px;top:131px;width:1px;height:88px;background:#5a5a5a"></div>
<div class="a sec" style="top:863px;height:45px"><svg class="a" style="left:8px;top:7px" width="5" height="8" viewBox="0 0 5 8"><path d="M.3 0v8L4.800 4z" fill="#c5c5c5"/></svg><span class="a">大纲</span>
<svg class="a" style="left:16px;top:24px" width="60" height="14" viewBox="0 0 60 14" fill="none" stroke="#c8c8c8" stroke-width="1"><circle cx="6.500" cy="7" r="5.500"/><path d="M4.300 4.800l4.400 4.400M8.700 4.800L4.300 9.200"/><path d="M33.500 1.800L39.300 12H27.700z" stroke-linejoin="round"/><path d="M33.500 5.500v3.500M33.500 10v1"/></svg>
<span class="a" style="left:33px;top:22px;height:18px;line-height:18px;font-size:12px;font-weight:normal;color:#c8c8c8">0</span>
<span class="a" style="left:59px;top:22px;height:18px;line-height:18px;font-size:12px;font-weight:normal;color:#c8c8c8">0</span>
</div>
</div>

<!-- EDITOR -->
<div id="ed" class="a">
<div class="a" style="left:0;top:0;width:640px;height:30px;background:#383838"></div>
<div class="a" style="left:1px;top:0;width:120px;height:30px;background:#2e2e2e"></div>
<div class="a tr" style="left:0;top:0;width:130px;height:30px"><svg style="left:13px;top:10px" width="12" height="12" viewBox="0 0 12 12"><rect width="12" height="12" rx="0.600" fill="#ffca28"/><text x="11" y="10.300" text-anchor="end" font-family="Liberation Sans,sans-serif" font-weight="bold" font-size="6.300" fill="#3a3320">JS</text></svg><span class="a" style="letter-spacing:-0.26px;left:33px;top:4.5px;font-style:italic;color:#fff">main.js</span>
<svg style="left:99px;top:10px" width="10" height="10" viewBox="0 0 10 10" stroke="#fff" stroke-width="1.300"><path d="M.5.5l9 9M9.500.5l-9 9"/></svg></div>
<svg class="a" style="left:575px;top:8px" width="46" height="14" viewBox="0 0 46 14" fill="none" stroke="#d6d6d6" stroke-width="1.100"><rect x=".6" y="1" width="11" height="11.500" rx=".8"/><path d="M6.100 1v11.500"/><g fill="#d6d6d6" stroke="none"><circle cx="32.500" cy="7" r="1"/><circle cx="37.500" cy="7" r="1"/><circle cx="42.500" cy="7" r="1"/></g></svg>
<!-- breadcrumb -->
<div class="a" style="left:1px;top:30px;width:639px;height:22px;background:#2e2e2e;box-shadow:0 2px 3px rgba(0,0,0,.35)"></div>
<svg class="a" style="left:8px;top:33px" width="110" height="16" viewBox="0 0 110 16" fill="none" stroke="#bdbdbd" stroke-width="1.100">
<path d="M3.500 4h11M3.500 8h11M3.500 12h11M.5 4h1.300M.5 8h1.300M.5 12h1.300"/>
<path d="M33 2.500h9v11.500l-4.500-4-4.500 4z"/>
<path d="M74 8H62M66.500 3.500L62 8l4.500 4.500"/>
<g stroke="#5c5c5c"><path d="M90 8h12M97.500 3.500L102 8l-4.500 4.500"/></g>
</svg>
<div class="a tr" style="left:0;top:30px;width:400px">
<span class="a" style="letter-spacing:0.16px;left:127px;color:#9a9a9a">common</span>
<svg style="left:183px;top:6px" width="7" height="11" viewBox="0 0 7 11" fill="none" stroke="#9a9a9a" stroke-width="1.100"><path d="M1 1l4.500 4.500L1 10"/></svg>
<svg style="left:196px;top:5px" width="12" height="12" viewBox="0 0 12 12"><rect width="12" height="12" rx="0.600" fill="#ffca28"/><text x="11" y="10.300" text-anchor="end" font-family="Liberation Sans,sans-serif" font-weight="bold" font-size="6.300" fill="#3a3320">JS</text></svg><span class="a" style="letter-spacing:-0.26px;left:216px;color:#c2c2c2">main.js</span>
<svg style="left:261px;top:6px" width="7" height="11" viewBox="0 0 7 11" fill="none" stroke="#c2c2c2" stroke-width="1.100"><path d="M1 1l4.500 4.500L1 10"/></svg>
<span class="a" style="left:272px;color:#c2c2c2">...</span>
</div>
<!-- current line -->
<div class="a" style="left:53px;top:180px;width:587px;height:32px;background:#474747"></div>
<div class="a" style="left:625px;top:52px;width:1px;height:354px;background:#444"></div>
<div class="a" style="left:626px;top:343px;width:14px;height:2px;background:#a0a0a0"></div>
<div class="a" style="left:0;top:0;width:1px;height:406px;background:#282828"></div>
<div id="code" class="a">(<i class="y">function</i><i class="b">(</i><i class="p">e</i><i class="b">){</i><i class="r">1</i><i class="y">==</i>e.code<i class="y"><b>&amp;&amp;</b></i>t.<i class="o">setStorageSync</i>(<i class="q">"</i><i class="s">configuration</i><i class="q">",</i>e.data)
<i class="b">}</i>))<i class="y">;var</i> e=t.<i class="o">getSystemInfoSync</i>();<i class="q">"</i><i class="s">web</i><i class="q">"</i><i class="y">==</i>e.uniPlatform<i class="y"><b>?</b></i>t<i class="b">.</i>
<i class="o">setStorageSync</i>(<i class="q">"</i><i class="s">platform</i><i class="q">","</i><i class="s">mp</i><i class="q">"</i>)<i class="y">:</i>t.<i class="o">setStorageSync</i>(<i class="q">"</i><i class="s">platform</i><i class="q">",</i>
<i class="q">"</i><i class="s">miniapp</i><i class="q">"</i>)<i class="b">}}</i><i class="y">;</i>e.default<i class="y">=</i>o<i class="b">}</i>)<i class="o">.call</i><i class="b">(</i><i class="k">this</i><i class="b">,</i><i class="o">n</i>(<i class="q">"</i><i class="s">df3c</i><i class="q">"</i>)[<i class="q">"</i><i class="s">default</i><i class="q">"</i>])<i class="b">}}</i>,<i class="b">[</i>
[<i class="q">"</i><i class="s">c4a3</i><i class="q">","</i><i class="s">common/runtime</i><i class="q">","</i><i class="s">common/vendor</i><i class="q">"</i>]]]<i class="b">);</i></div>
</div>

<!-- DEBUG PANEL -->
<div id="pn" class="a">
<div class="a" style="left:0;top:0;width:640px;height:30px;background:#333;border-top:1px solid #4a4a4a"></div>
<span class="a pt" style="left:21px">构建</span>
<span class="a pt" style="left:63px;color:#f0f0f0">调试器</span>
<div class="a" style="left:63px;top:28px;width:33px;height:1px;background:#e8e8e8"></div>
<div class="a" style="left:104px;top:7px;width:34px;height:18px;border-radius:9px;background:#d6453d;color:#fff;font-size:11px;line-height:18px;text-align:center">5, 14</div>
<span class="a pt" style="left:157px">问题</span>
<span class="a pt" style="left:199px">输出</span>
<span class="a pt" style="left:240px">终端</span>
<span class="a pt" style="left:283px">代码质量</span>
<svg class="a" style="left:575px;top:12.500px" width="44" height="10" viewBox="0 0 44 10" fill="none" stroke="#e0e0e0" stroke-width="1.200"><path d="M1 7.500L5.500 3l4.500 4.500"/><path d="M33 .8l8.500 8.500M41.500 .8L33 9.300"/></svg>
<!-- devtools tabs -->
<div class="a" style="left:0;top:30px;width:640px;height:27px;background:#292a2d;border-bottom:1px solid #4b4b4b"></div>
<svg class="a" style="left:11px;top:36px" width="16" height="16" viewBox="0 0 16 16" fill="none" stroke="#9aa0a6" stroke-width="1.200"><path d="M12.500 6V2.500h-11v10H6"/><path d="M7 6.500l2.800 8 1.400-3.200 3.300 3.300 1-1-3.300-3.300L15.500 9z" fill="#9aa0a6" stroke="none"/></svg>
<div class="a" style="left:35px;top:36px;width:1px;height:16px;background:#4a4a4a"></div>
<span class="a dt" style="letter-spacing:0.07px;margin-left:0.5px;left:53px">Wxml</span>
<span class="a dt" style="letter-spacing:-0.16px;margin-left:0.5px;left:107px">Console</span>
<div class="a" style="left:162px;top:30px;width:65px;height:26px;background:#000"></div>
<span class="a dt" style="letter-spacing:-0.35px;margin-left:0.8px;left:173px;color:#fff">Sources</span>
<span class="a dt" style="letter-spacing:0.19px;margin-left:0.8px;left:238px">Network</span>
<span class="a dt" style="letter-spacing:-0.20px;margin-left:0.4px;left:307px">Performance</span>
<svg class="a" style="left:394px;top:39px" width="10" height="9" viewBox="0 0 10 9" fill="none" stroke="#b8b8b8" stroke-width="1.100"><path d="M1 .8l3.500 3.700L1 8.200M5.500 .8L9 4.500 5.500 8.200"/></svg>
<svg class="a" style="left:463px;top:37px" width="95" height="14" viewBox="0 0 95 14"><circle cx="6" cy="7" r="5" fill="#e8453c"/><path d="M4 5l4 4M8 5L4 9" stroke="#fff" stroke-width="1.300"/><path d="M33 2L38.200 11.800h-10.400z" fill="#f5bd00"/><path d="M32.500 5h1v3.800h-1zM32.500 9.600h1v1.100h-1z" fill="#fff"/><path d="M60 2.700h7.400q1 0 1 1v5.200q0 1-1 1h-6.600l-1.800 1.600V3.700q0-1 1-1z" fill="#1a73e8"/><path d="M61 5h5.500M61 7.200h3.500" stroke="#8ab4f8" stroke-width=".9"/></svg>
<span class="a dt" style="left:478px">5</span>
<span class="a dt" style="left:504px">14</span>
<span class="a dt" style="left:535px">3</span>
<div class="a" style="left:547px;top:36px;width:1px;height:16px;background:#4a4a4a"></div>
<svg class="a" style="left:558px;top:34px" width="80" height="20" viewBox="0 0 80 20"><g fill="#9aa0a6"><path d="M9 3.500l1.300-.2.500 1.700 1 .5 1.600-.9 1.600 1.600-.9 1.600.5 1 1.700.5v2.400l-1.700.5-.5 1 .9 1.600-1.600 1.600-1.600-.9-1 .5-.5 1.700H8l-.5-1.700-1-.5-1.600.9-1.600-1.600.9-1.600-.5-1L2 10.700V8.300l1.700-.5.5-1-.9-1.600 1.600-1.600 1.600.9 1-.5.500-1.700z"/><circle cx="9" cy="9.700" r="2.300" fill="#292a2d"/><circle cx="37" cy="4.500" r="1.400"/><circle cx="37" cy="10" r="1.400"/><circle cx="37" cy="15.500" r="1.400"/></g><g fill="none" stroke="#9aa0a6" stroke-width="1.500"><path d="M62 6h11v8H62z" fill="#9aa0a6" opacity=".35"/><path d="M58.500 8.500v8.500h11"/><path d="M62 5.500h11.500v8.500H62z"/></g></svg>
<!-- sources subtabs -->
<div class="a" style="left:0;top:57px;width:640px;height:27px;background:#292a2d;border-bottom:1px solid #4b4b4b"></div>
<div class="a" style="left:0;top:84px;width:236px;height:60px;background:#292a2d"></div>
<div class="a" style="left:1px;top:57px;width:45px;height:26px;background:#000"></div>
<span class="a dt" style="transform:scaleX(0.910);transform-origin:0 50%;margin-left:-0.5px;left:11px;top:63px;color:#fff">Page</span>
<span class="a dt" style="letter-spacing:-0.30px;margin-left:-0.5px;left:56px;top:63px">Filesystem</span>
<svg class="a" style="left:129px;top:66px" width="10" height="9" viewBox="0 0 10 9" fill="none" stroke="#b8b8b8" stroke-width="1.100"><path d="M1 .8l3.500 3.700L1 8.200M5.500 .8L9 4.500 5.500 8.200"/></svg>
<svg class="a" style="left:218px;top:63px" width="6" height="16" viewBox="0 0 6 16" fill="#b8b8b8"><circle cx="3" cy="2.500" r="1.400"/><circle cx="3" cy="8" r="1.400"/><circle cx="3" cy="13.500" r="1.400"/></svg>
<div class="a" style="left:236px;top:57px;width:1px;height:100px;background:#4b4b4b"></div>
<svg class="a" style="left:246px;top:64px" width="16" height="13" viewBox="0 0 16 13" fill="none" stroke="#a8a8a8" stroke-width="1.100"><rect x=".6" y=".6" width="14.500" height="11.800"/><path d="M5 .6v11.800"/><path d="M11.500 3.500v6L7.500 6.500z" fill="#a8a8a8" stroke="none"/></svg>
<div class="a" style="left:237px;top:84px;width:403px;height:46px;background:#3c3c3c"></div>
<div class="a" style="left:237px;top:130px;width:403px;height:27px;background:#292a2d;border-top:1px solid #484848"></div>
<svg class="a" style="left:617px;top:137px" width="13" height="15" viewBox="0 0 13 15" fill="none" stroke="#a8a8a8" stroke-width="1"><rect x=".5" y=".5" width="12" height="14"/><path d="M.5 10h12"/><path d="M3.500 3.500h6l-3 4z" fill="#a8a8a8" stroke="none"/></svg>
<!-- tree -->
<svg class="a" style="left:5px;top:90px" width="60" height="56" viewBox="0 0 60 56"><g fill="#9aa0a6"><path d="M0 3h8L4 9.500z"/><path d="M12 23h8l-4 6.500z"/><path d="M25 43h8l-4 6.500z"/></g><g fill="none" stroke="#bdbdbd" stroke-width="1.300"><rect x="14.700" y=".7" width="12.600" height="11.600" rx="1"/><path d="M14.700 3.200h12.600" stroke-width="1.800"/><path d="M27 32.500h10a3 3 0 0 0 .5-6 4.500 4.500 0 0 0-8.700-1 3.600 3.600 0 0 0-1.800 7z"/></g><path d="M38 41h5.500l1.500 2H52v13H38z" fill="#15539e"/></svg>
<span class="a dt" style="letter-spacing:0.53px;left:38px;top:89px">top</span>
<span class="a dt" style="letter-spacing:-0.34px;left:51px;top:108px">127.0.0.1:11191</span>
<span class="a dt" style="letter-spacing:-0.16px;left:62px;top:129px">appservice</span>
<div class="a" style="left:222px;top:84px;width:14px;height:59px;background:#242424"></div>
<div class="a" style="left:222px;top:84px;width:14px;height:16px;background:#383838;border:1px solid #4b4b4b"></div>
<div class="a" style="left:0;top:143px;width:236px;height:14px;background:#2a2a2a"></div>
<div class="a" style="left:1px;top:144px;width:129px;height:13px;background:#3e3e3e"></div>
<div class="a" style="left:222px;top:143px;width:14px;height:14px;background:#333"></div>
<!-- debugger toolbar -->
<div class="a" style="left:0;top:157px;width:640px;height:28px;background:#292a2d;border-top:1px solid #4b4b4b;border-bottom:1px solid #4b4b4b"></div>
<svg class="a" style="left:10px;top:162px" width="210" height="18" viewBox="0 0 210 18"><g fill="#9aa0a6"><rect x="3" y="4.500" width="3" height="9"/><rect x="9" y="4.500" width="3" height="9"/></g>
<g fill="none" stroke="#5f6368" stroke-width="2.200"><path d="M28.500 11.500a6.300 6.300 0 0 1 11.800-2"/><path d="M63.500 2.500v6.500M91.500 15.500V9M113 9h5" /></g>
<g fill="#5f6368"><path d="M44 6.500l-.8 6.300-5.400-3.300z"/><circle cx="35.500" cy="13.200" r="1.900"/><path d="M59.300 7.500h8.400l-4.200 4.800z"/><circle cx="63.500" cy="15.200" r="1.700"/><path d="M87.300 9.300h8.400l-4.200-4.800z"/><circle cx="91.500" cy="15.800" r="1.700" /><path d="M117 4.800v8.400l4.800-4.200z"/><circle cx="125.500" cy="9" r="1.700"/></g>
<rect x="137" y="2" width="1" height="14" fill="#4a4a4a"/>
<path d="M146.500 5h12l4.500 4-4.500 4h-12z" fill="#9aa0a6"/><path d="M147 16L158.500 2" stroke="#292a2d" stroke-width="3.600"/><path d="M148 16L159.500 2" stroke="#9aa0a6" stroke-width="1.500"/>
<path d="M181 2h6l4 4v6l-4 4h-6l-4-4V6z" fill="#9aa0a6"/><rect x="181.300" y="5.500" width="1.900" height="7" fill="#292a2d"/><rect x="184.800" y="5.500" width="1.900" height="7" fill="#292a2d"/></svg>
<!-- call stack -->
<div class="a" style="left:0;top:185px;width:306px;height:21px;background:#292a2d;border-bottom:1px solid #4b4b4b"></div>
<svg class="a" style="left:7px;top:192px" width="8" height="7" viewBox="0 0 8 7"><path d="M0 0h8L4 6.500z" fill="#9aa0a6"/></svg>
<span class="a dt" style="letter-spacing:-0.40px;left:18px;top:188.0px">Call Stack</span>
<span class="a dt" style="letter-spacing:-0.25px;left:124px;top:213px;font-style:italic;color:#d2d2d2">Not paused</span>
<div class="a" style="left:0;top:234px;width:306px;height:22px;background:#292a2d;border-top:1px solid #4b4b4b;border-bottom:1px solid #4b4b4b"></div>
<svg class="a" style="left:7px;top:242px" width="8" height="7" viewBox="0 0 8 7"><path d="M0 0h8L4 6.500z" fill="#9aa0a6"/></svg>
<span class="a dt" style="left:18px;top:238.0px">Breakpoints</span>
<span class="a dt" style="letter-spacing:-0.17px;margin-left:0.4px;left:114px;top:263px;font-style:italic;color:#d2d2d2">No breakpoints</span>
<div class="a" style="left:306px;top:185px;width:14px;height:92px;background:#2a2a2a"></div>
<div class="a" style="left:306px;top:185px;width:14px;height:45px;background:#3e3e3e"></div>
<div class="a" style="left:320px;top:158px;width:1px;height:119px;background:#4b4b4b"></div>
<div class="a" style="left:321px;top:158px;width:52px;height:26px;background:#000"></div>
<span class="a dt" style="letter-spacing:-0.38px;margin-left:0.4px;left:330px;top:164px;color:#fff">Scope</span>
<span class="a dt" style="letter-spacing:-0.12px;left:383px;top:164px">Watch</span>
<span class="a dt" style="letter-spacing:-0.15px;left:450px;top:192px;font-style:italic;color:#d2d2d2">Not paused</span>
<!-- console drawer -->
<div class="a" style="left:0;top:277px;width:640px;height:28px;background:#292a2d;border-top:1px solid #4b4b4b;border-bottom:1px solid #4b4b4b"></div>
<svg class="a" style="left:14px;top:284px" width="6" height="16" viewBox="0 0 6 16" fill="#9aa0a6"><circle cx="3" cy="2.500" r="1.300"/><circle cx="3" cy="7.500" r="1.300"/><circle cx="3" cy="12.500" r="1.300"/></svg>
<div class="a" style="left:29px;top:278px;width:62px;height:26px;background:#000"></div>
<span class="a dt" style="letter-spacing:-0.25px;margin-left:0.6px;left:38px;top:284px;color:#fff">Console</span>
<span class="a dt" style="transform:scaleX(0.883);transform-origin:0 50%;left:101px;top:284.0px">Task</span>
<svg class="a" style="left:618px;top:286px" width="10" height="10" viewBox="0 0 10 10" fill="none" stroke="#c0c0c0" stroke-width="1.200"><path d="M.5.5l9 9M9.500.5l-9 9"/></svg>
<!-- console toolbar -->
<div class="a" style="left:0;top:305px;width:640px;height:27px;background:#292a2d;border-bottom:1px solid #4b4b4b"></div>
<svg class="a" style="left:8px;top:310px" width="50" height="16" viewBox="0 0 50 16" fill="none" stroke="#9aa0a6" stroke-width="1.200"><rect x="1" y="2" width="14" height="12"/><path d="M5 2v12"/><path d="M8 5v6l4.500-3z" fill="#9aa0a6" stroke="none"/><circle cx="38" cy="8" r="6" stroke-width="1.600"/><path d="M33.800 3.800l8.400 8.400" stroke-width="1.600"/></svg>
<div class="a" style="left:63px;top:310px;width:1px;height:16px;background:#4a4a4a"></div>
<span class="a dt" style="left:73px;top:311px">top</span>
<svg class="a" style="left:194px;top:315px" width="8" height="7" viewBox="0 0 8 7"><path d="M0 0h8L4 6.500z" fill="#9aa0a6"/></svg>
<div class="a" style="left:210px;top:310px;width:1px;height:16px;background:#4a4a4a"></div>
<svg class="a" style="left:220px;top:311px" width="17" height="14" viewBox="0 0 17 14"><path d="M.5 7q8-10.500 16 0-8 10.500-16 0z" fill="#9aa0a6"/><circle cx="8.500" cy="7" r="3.200" fill="#292a2d"/><circle cx="8.500" cy="7" r="1.700" fill="#9aa0a6"/></svg>
<div class="a" style="left:247px;top:310px;width:1px;height:16px;background:#4a4a4a"></div>
<div class="a" style="left:254px;top:308px;width:147px;height:21px;background:#242424;border:1px solid #4a4a4a"></div>
<span class="a dt" style="left:260px;top:311px;color:#c8c8c8">Filter</span>
<span class="a dt" style="letter-spacing:-0.22px;margin-left:0.6px;left:409px;top:311px">Default levels</span>
<svg class="a" style="left:484px;top:315px" width="8" height="7" viewBox="0 0 8 7"><path d="M0 0h8L4 6.500z" fill="#9aa0a6"/></svg>
<div class="a" style="left:604px;top:310px;width:1px;height:16px;background:#4a4a4a"></div>
<svg class="a" style="left:614px;top:309px" width="18" height="18" viewBox="0 0 18 18"><g fill="#9aa0a6"><path d="M9 1.500l1.300-.2.500 1.700 1 .5 1.600-.9 1.600 1.600-.9 1.600.5 1 1.700.5v2.400l-1.700.5-.5 1 .9 1.600-1.600 1.600-1.600-.9-1 .5-.5 1.700H8l-.5-1.700-1-.5-1.600.9-1.600-1.600.9-1.600-.5-1L2 8.700V6.300l1.700-.5.5-1-.9-1.600 1.600-1.600 1.600.9 1-.5.500-1.700z" transform="translate(0 1.500)"/><circle cx="9" cy="9.200" r="2.300" fill="#292a2d"/></g></svg>
<!-- console messages -->
<svg class="a" style="left:11px;top:337px" width="8" height="7" viewBox="0 0 8 7"><path d="M0 0h8L4 6.500z" fill="#9aa0a6"/></svg>
<span class="a cl" style="left:24px;top:334px;font-weight:bold;color:#e8e8e8" id="loghdr">Mon Dec 29 2025 14:55:40 GMT+0800 (<span class="cj">中国标准时间</span>) <span class="cj">游客模式</span></span>
<div class="a" style="left:14px;top:350px;width:611px;height:20px;background:#332b00;border-top:1px solid #665500;border-bottom:1px solid #665500"></div>
<div class="a" style="left:15px;top:350px;width:1px;height:20px;background:#777"></div>
<svg class="a" style="left:21px;top:355px" width="11" height="10" viewBox="0 0 11 10"><path d="M5.500 .3L10.800 9.700H.2z" fill="#f5bd00"/><path d="M5 3.500h1v3.300H5zM5 7.500h1v1.100H5z" fill="#2a2200"/></svg>
<span class="a cl" style="left:38px;top:354px"><span class="cj">请注意游客模式下，调用</span> wx.operateWXData <span class="cj">是受限的</span>, API <span class="cj">的返回是工具的模拟返回</span></span>
<div class="a" style="left:0;top:370px;width:625px;height:20px;background:#332b00;border-bottom:1px solid #665500"></div>
<svg class="a" style="left:9px;top:375px" width="11" height="10" viewBox="0 0 11 10"><path d="M5.500 .3L10.800 9.700H.2z" fill="#f5bd00"/><path d="M5 3.500h1v3.300H5zM5 7.500h1v1.100H5z" fill="#2a2200"/></svg>
<span class="a cl" style="left:25px;top:374px">[<span class="cj">自动热重载</span>] <span class="cj">已开启代码文件保存后自动热重载</span></span>
<div class="a" style="left:0;top:390px;width:625px;height:47px;background:#332b00;border-bottom:1px solid #665500"></div>
<svg class="a" style="left:9px;top:395px" width="11" height="10" viewBox="0 0 11 10"><path d="M5.500 .3L10.800 9.700H.2z" fill="#f5bd00"/><path d="M5 3.500h1v3.300H5zM5 7.500h1v1.100H5z" fill="#2a2200"/></svg>
<span class="a cl" style="left:25px;top:394px">[pages/me/me] Some selectors are not allowed in component wxss, including tag name</span>
<span class="a cl" style="left:25px;top:408px">selectors, ID selectors, and attribute selectors.(.<u>/uni_modules/uview-ui/components/u-i</u></span>
<span class="a cl" style="left:25px;top:422px"><u>con/u-icon.wxss:1</u>:446)</span>
<svg class="a" style="left:11px;top:443px" width="6" height="9" viewBox="0 0 6 9" fill="none" stroke="#4a8df6" stroke-width="1.400"><path d="M1 1l3.500 3.500L1 8"/></svg>
<div class="a" style="left:625px;top:333px;width:15px;height:141px;background:#2a2a2a"></div>
<div class="a" style="left:625px;top:455px;width:15px;height:19px;background:#383838;border:1px solid #4b4b4b"></div>
</div>
<div class="a" style="left:610px;top:498px;width:1px;height:474px;background:#2a2a2a"></div>
<!-- STATUS -->
<div id="status" class="a">
<span class="a" style="letter-spacing:-0.17px;margin-left:-0.4px;left:346px">行 1，列 3314</span>
<span class="a" style="letter-spacing:-0.30px;left:436px">空格: 2</span>
<span class="a" style="letter-spacing:-0.51px;left:489px">UTF-8</span>
<span class="a" style="transform:scaleX(0.810);transform-origin:0 50%;margin-left:-0.4px;left:537px">CRLF</span>
<span class="a" style="letter-spacing:-0.40px;margin-left:-0.4px;left:579px">JavaScript</span>
</div>
</body>
</html>
